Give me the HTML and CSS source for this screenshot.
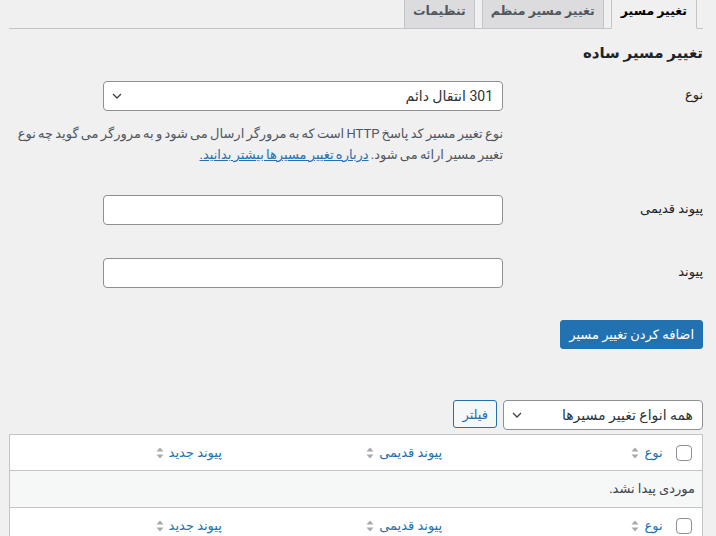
FILE: index.html
```html
<!DOCTYPE html>
<html lang="fa" dir="rtl">
<head>
    <meta charset="utf-8">
    <meta name="viewport" content="width=device-width, initial-scale=1.0">
    <title>تغییر مسیر</title>
    <link rel="stylesheet" href="styles.css">
</head>
<body>
    <div class="wrap">
        <nav class="nav-tabs">
            <a href="#" class="nav-tab active">تغییر مسیر</a>
            <a href="#" class="nav-tab">تغییر مسیر منظم</a>
            <a href="#" class="nav-tab">تنظیمات</a>
        </nav>

        <h2 class="section-title">تغییر مسیر ساده</h2>

        <form class="redirect-form" onsubmit="return false;">
            <div class="field-row">
                <label class="field-label" for="redirect_type">نوع</label>
                <div class="field-body">
                    <span class="select-wrap">
                        <select id="redirect_type" class="select">
                            <option>301 انتقال دائم</option>
                            <option>302 انتقال موقت</option>
                            <option>307 انتقال موقت</option>
                        </select>
                        <svg class="select-arrow" width="10" height="6" viewBox="0 0 10 6"><path d="M1 1 L5 5 L9 1" fill="none" stroke="#3c434a" stroke-width="1.3"/></svg>
                    </span>
                    <p class="description">نوع تغییر مسیر کد پاسخ HTTP است که به مرورگر ارسال می شود و به مرورگر می گوید چه نوع تغییر مسیر ارائه می شود. <a href="#">درباره تغییر مسیرها بیشتر بدانید.</a></p>
                </div>
            </div>
            <div class="field-row">
                <label class="field-label" for="old_link">پیوند قدیمی</label>
                <div class="field-body">
                    <input type="text" id="old_link" class="text-input">
                </div>
            </div>
            <div class="field-row">
                <label class="field-label" for="new_link">پیوند</label>
                <div class="field-body">
                    <input type="text" id="new_link" class="text-input">
                </div>
            </div>
            <div class="submit-row">
                <button type="submit" class="button-primary">اضافه کردن تغییر مسیر</button>
            </div>
        </form>

        <div class="tablenav">
            <span class="select-wrap small">
                <select class="select">
                    <option>همه انواع تغییر مسیرها</option>
                    <option>301</option>
                    <option>302</option>
                </select>
                <svg class="select-arrow" width="10" height="6" viewBox="0 0 10 6"><path d="M1 1 L5 5 L9 1" fill="none" stroke="#3c434a" stroke-width="1.3"/></svg>
            </span>
            <button type="button" class="button">فیلتر</button>
        </div>

        <table class="list-table">
            <colgroup>
                <col class="col-check">
                <col>
                <col>
                <col>
            </colgroup>
            <thead>
                <tr>
                    <td class="check-column"><input type="checkbox" class="checkbox"></td>
                    <th><a href="#" class="sort-link">نوع <svg class="sort-arrows" width="8" height="14" viewBox="0 0 8 14"><path d="M0.5 5.5 L4 1.5 L7.5 5.5 Z M0.5 8.5 L4 12.5 L7.5 8.5 Z" fill="#a7aaad"/></svg></a></th>
                    <th><a href="#" class="sort-link">پیوند قدیمی <svg class="sort-arrows" width="8" height="14" viewBox="0 0 8 14"><path d="M0.5 5.5 L4 1.5 L7.5 5.5 Z M0.5 8.5 L4 12.5 L7.5 8.5 Z" fill="#a7aaad"/></svg></a></th>
                    <th><a href="#" class="sort-link">پیوند جدید <svg class="sort-arrows" width="8" height="14" viewBox="0 0 8 14"><path d="M0.5 5.5 L4 1.5 L7.5 5.5 Z M0.5 8.5 L4 12.5 L7.5 8.5 Z" fill="#a7aaad"/></svg></a></th>
                </tr>
            </thead>
            <tbody>
                <tr class="no-items">
                    <td colspan="4">موردی پیدا نشد.</td>
                </tr>
            </tbody>
            <tfoot>
                <tr>
                    <td class="check-column"><input type="checkbox" class="checkbox"></td>
                    <th><a href="#" class="sort-link">نوع <svg class="sort-arrows" width="8" height="14" viewBox="0 0 8 14"><path d="M0.5 5.5 L4 1.5 L7.5 5.5 Z M0.5 8.5 L4 12.5 L7.5 8.5 Z" fill="#a7aaad"/></svg></a></th>
                    <th><a href="#" class="sort-link">پیوند قدیمی <svg class="sort-arrows" width="8" height="14" viewBox="0 0 8 14"><path d="M0.5 5.5 L4 1.5 L7.5 5.5 Z M0.5 8.5 L4 12.5 L7.5 8.5 Z" fill="#a7aaad"/></svg></a></th>
                    <th><a href="#" class="sort-link">پیوند جدید <svg class="sort-arrows" width="8" height="14" viewBox="0 0 8 14"><path d="M0.5 5.5 L4 1.5 L7.5 5.5 Z M0.5 8.5 L4 12.5 L7.5 8.5 Z" fill="#a7aaad"/></svg></a></th>
                </tr>
            </tfoot>
        </table>
    </div>
</body>
</html>
```

FILE: styles.css
```css
* {
    box-sizing: border-box;
}
body {
    margin: 0;
    background-color: #f0f0f1;
    color: #3c434a;
    font-family: Roboto, "DejaVu Sans", sans-serif;
    font-size: 13px;
    line-height: 1.4;
}
a {
    color: #2271b1;
}
.wrap {
    margin: 0 13px 0 9px;
}

/* tabs */
.nav-tabs {
    display: flex;
    margin-top: -7px;
    padding-right: 6px;
    border-bottom: 1px solid #c3c4c7;
}
.nav-tab {
    margin-left: 7px;
    margin-bottom: -1px;
    padding: 5px 8px;
    border: 1px solid #c3c4c7;
    background-color: #dcdcde;
    color: #50575e;
    font-size: 12.5px;
    font-weight: 600;
    line-height: 24px;
    text-decoration: none;
}
.nav-tab.active {
    padding: 5px 9px;
    background-color: #f0f0f1;
    border-bottom-color: #f0f0f1;
    color: #000;
}

.section-title {
    margin: 13px 0 2px;
    font-size: 15px;
    font-weight: 600;
    line-height: 22px;
    color: #1d2327;
}

/* form */
.field-row {
    display: flex;
    align-items: flex-start;
}
.field-label {
    flex: none;
    width: 200px;
    padding: 20px 0 20px 10px;
    line-height: 18px;
    color: #1d2327;
}
.field-body {
    flex: 1;
    padding: 15px 0;
}
.select-wrap {
    position: relative;
    display: block;
    width: 400px;
}
.select-wrap.small {
    width: 200px;
}
.select {
    display: block;
    width: 100%;
    height: 30px;
    margin: 0;
    padding: 0 9px 0 24px;
    appearance: none;
    -webkit-appearance: none;
    border: 1px solid #8c8f94;
    border-radius: 4px;
    background-color: #fff;
    color: #2c3338;
    font-family: inherit;
    font-size: 14px;
}
.select-arrow {
    position: absolute;
    left: 9px;
    top: 12px;
    pointer-events: none;
}
.description {
    margin: 12px 0 0;
    line-height: 21px;
    word-spacing: -1px;
    color: #50575e;
}
.text-input {
    display: block;
    width: 400px;
    height: 30px;
    margin: 0 0 3px;
    padding: 0 8px;
    border: 1px solid #8c8f94;
    border-radius: 4px;
    background-color: #fff;
    font-family: inherit;
    font-size: 14px;
}
.submit-row {
    margin-top: 14px;
}
.button-primary {
    height: 29px;
    padding: 0 8px;
    border: 1px solid #2271b1;
    border-radius: 3px;
    background-color: #2271b1;
    color: #fff;
    font-family: inherit;
    font-size: 13px;
    cursor: pointer;
}

/* list */
.tablenav {
    display: flex;
    align-items: flex-start;
    gap: 6px;
    margin-top: 51px;
    margin-bottom: 4px;
}
.button {
    height: 28px;
    padding: 0 8px;
    border: 1px solid #2271b1;
    border-radius: 3px;
    background-color: #f6f7f7;
    color: #2271b1;
    font-family: inherit;
    font-size: 13px;
    cursor: pointer;
}
.list-table {
    width: 100%;
    table-layout: fixed;
    border-collapse: collapse;
    border: 1px solid #c3c4c7;
    background-color: #fff;
}
.col-check {
    width: 32px;
}
.list-table th {
    padding: 0;
    font-weight: normal;
    text-align: right;
}
.check-column {
    padding: 0 10px 0 0;
    vertical-align: middle;
}
.checkbox {
    display: block;
    width: 16px;
    height: 16px;
    margin: 0;
    appearance: none;
    -webkit-appearance: none;
    border: 1px solid #8c8f94;
    border-radius: 4px;
    background-color: #fff;
}
.sort-link {
    display: flex;
    align-items: center;
    gap: 5px;
    padding: 8px;
    line-height: 19px;
    text-decoration: none;
}
.sort-arrows {
    flex: none;
}
.no-items td {
    padding: 8px 7px;
    line-height: 20px;
    background-color: #f6f7f7;
    border-top: 1px solid #c3c4c7;
}
.list-table tfoot tr {
    border-top: 1px solid #c3c4c7;
}
```
